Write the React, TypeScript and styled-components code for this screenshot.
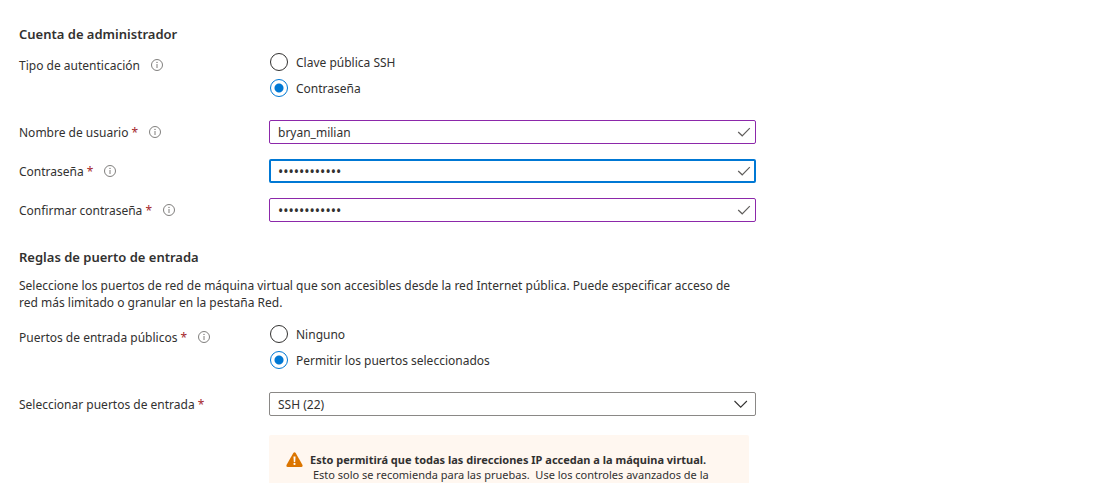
import React from "react";
import styled, { createGlobalStyle, css } from "styled-components";

const GlobalStyle = createGlobalStyle`
  *, *::before, *::after { box-sizing: border-box; }
  body {
    margin: 0;
    background: #ffffff;
    color: #323130;
    font-family: "Segoe UI", "Noto Sans", "Open Sans", sans-serif;
    font-size: 12px;
    line-height: 20px;
  }
`;

const Page = styled.main`
  height: 100vh;
  overflow: hidden;
  padding: 24px 19px 0;
`;

const Form = styled.form`
  max-width: 737px;
`;

const Section = styled.section`
  & + & {
    margin-top: 25px;
  }
`;

const Heading = styled.h2`
  margin: 0;
  font-size: 13px;
  font-weight: 600;
  line-height: 20px;
`;

const Description = styled.p`
  max-width: 728px;
  margin: 10px 0 14px;
  line-height: 17px;
`;

const Row = styled.div<{ $space?: number }>`
  display: grid;
  grid-template-columns: 250px minmax(0, 1fr);
  align-items: start;
  margin-top: ${({ $space = 15 }) => $space}px;
`;

const LabelCell = styled.div`
  display: flex;
  align-items: flex-start;
  gap: 11px;
  padding-top: 3px;
`;

const Required = styled.span`
  color: #a4262c;
`;

const InfoButton = styled.button`
  display: flex;
  margin-top: 3px;
  padding: 0;
  border: 0;
  background: none;
  color: #605e5c;
`;

const Options = styled.div`
  display: flex;
  flex-direction: column;
  gap: 8px;
  padding-left: 1px;
`;

const Option = styled.label`
  display: flex;
  align-items: center;
  gap: 8px;
  height: 18px;
`;

const OptionText = styled.span`
  padding-top: 2px;
`;

const Radio = styled.input`
  appearance: none;
  width: 18px;
  height: 18px;
  margin: 0;
  border: 1px solid #323130;
  border-radius: 50%;
  background: #ffffff;

  &:checked {
    border-color: #0078d4;
    background: radial-gradient(circle, #0078d4 4px, #ffffff 5px);
  }
`;

const Field = styled.div`
  display: grid;
  align-items: center;

  > * {
    grid-area: 1 / 1;
  }

  > svg {
    justify-self: end;
    margin-right: 5px;
    pointer-events: none;
  }
`;

const control = css`
  width: 100%;
  height: 24px;
  padding: 0 28px 0 8px;
  border: 1px solid #8c28aa;
  border-radius: 2px;
  outline: 0;
  background: #ffffff;
  color: inherit;
  font: inherit;
`;

const Input = styled.input<{ $active?: boolean }>`
  ${control}

  &[type="password"] {
    font-size: 14px;
  }

  ${({ $active }) =>
    $active &&
    css`
      padding-left: 7px;
      border: 2px solid #0078d4;
    `}
`;

const Select = styled.select`
  ${control}
  appearance: none;
  padding-top: 2px;
  border-color: #8a8886;
`;

const Warning = styled.div`
  display: flex;
  gap: 7px;
  max-width: 480px;
  margin: 19px 0 0 250px;
  padding: 17px 16px 17px 17px;
  border-radius: 2px;
  background: #fff7f0;
  font-size: 11px;
  line-height: 15px;

  > svg {
    flex: none;
  }
`;

const WarningText = styled.p`
  margin: 0;
  white-space: pre-wrap;
`;

const WarningTitle = styled.strong`
  display: block;
  font-weight: 700;
`;

const InfoIcon = () => (
  <svg width="12" height="12" viewBox="0 0 12 12" fill="none" aria-hidden="true">
    <circle cx="6" cy="6" r="5.5" stroke="currentColor" strokeWidth="0.8" />
    <path d="M6 5v4" stroke="currentColor" strokeWidth="0.8" />
    <circle cx="6" cy="3.4" r="0.55" fill="currentColor" />
  </svg>
);

const CheckIcon = () => (
  <svg width="14" height="12" viewBox="0 0 14 12" fill="none" aria-hidden="true">
    <path d="M1.2 6l4 3.8 7.6-7.6" stroke="#605e5c" strokeWidth="1.2" />
  </svg>
);

const ChevronIcon = () => (
  <svg width="18" height="12" viewBox="0 0 18 12" fill="none" aria-hidden="true">
    <path d="M1.5 3l6.2 6.2L13.9 3" stroke="#323130" strokeWidth="1.1" />
  </svg>
);

const WarningIcon = () => (
  <svg width="17" height="15" viewBox="0 0 17 15" aria-hidden="true">
    <path
      d="M7.3 1.1Q8.5-.6 9.7 1.1L16.500 13Q17 14.900 15.300 15H1.700Q0 14.900.5 13Z"
      fill="#db7500"
    />
    <path d="M7.500 4.500h2l-.3 5.500H7.800Z" fill="#ffffff" />
    <circle cx="8.500" cy="11.900" r="1.100" fill="#ffffff" />
  </svg>
);

interface LabelProps {
  text: string;
  htmlFor?: string;
  id?: string;
  required?: boolean;
  info?: boolean;
}

const FieldLabel = ({ text, htmlFor, id, required, info = true }: LabelProps) => (
  <LabelCell>
    <label htmlFor={htmlFor} id={id}>
      {text}
      {required && <Required> *</Required>}
    </label>
    {info && (
      <InfoButton type="button" aria-label={`Información: ${text}`}>
        <InfoIcon />
      </InfoButton>
    )}
  </LabelCell>
);

interface RadioRowProps {
  name: string;
  label: string;
  required?: boolean;
  options: string[];
  selected: string;
  space?: number;
}

const RadioRow = ({ name, label, required, options, selected, space }: RadioRowProps) => (
  <Row $space={space}>
    <FieldLabel id={`${name}-label`} text={label} required={required} />
    <Options role="radiogroup" aria-labelledby={`${name}-label`}>
      {options.map((option) => (
        <Option key={option}>
          <Radio type="radio" name={name} defaultChecked={option === selected} />
          <OptionText>{option}</OptionText>
        </Option>
      ))}
    </Options>
  </Row>
);

interface TextRowProps {
  id: string;
  label: string;
  value: string;
  type?: string;
  active?: boolean;
  space?: number;
}

const TextRow = ({ id, label, value, type = "text", active, space }: TextRowProps) => (
  <Row $space={space}>
    <FieldLabel htmlFor={id} text={label} required />
    <Field>
      <Input id={id} type={type} defaultValue={value} $active={active} />
      <CheckIcon />
    </Field>
  </Row>
);

export default function App() {
  return (
    <>
      <GlobalStyle />
      <Page>
        <Form>
          <Section>
            <Heading>Cuenta de administrador</Heading>
            <RadioRow
              name="auth"
              label="Tipo de autenticación"
              options={["Clave pública SSH", "Contraseña"]}
              selected="Contraseña"
              space={9}
            />
            <TextRow id="user" label="Nombre de usuario" value="bryan_milian" space={23} />
            <TextRow id="password" label="Contraseña" value="abcdefghijkl" type="password" active />
            <TextRow id="confirm" label="Confirmar contraseña" value="abcdefghijkl" type="password" />
          </Section>
          <Section>
            <Heading>Reglas de puerto de entrada</Heading>
            <Description>
              Seleccione los puertos de red de máquina virtual que son accesibles desde la red
              Internet pública. Puede especificar acceso de red más limitado o granular en la
              pestaña Red.
            </Description>
            <RadioRow
              name="ports"
              label="Puertos de entrada públicos"
              required
              options={["Ninguno", "Permitir los puertos seleccionados"]}
              selected="Permitir los puertos seleccionados"
              space={14}
            />
            <Row $space={23}>
              <FieldLabel
                htmlFor="inbound"
                text="Seleccionar puertos de entrada"
                required
                info={false}
              />
              <Field>
                <Select id="inbound" defaultValue="ssh">
                  <option value="ssh">SSH (22)</option>
                </Select>
                <ChevronIcon />
              </Field>
            </Row>
            <Warning role="alert">
              <WarningIcon />
              <WarningText>
                <WarningTitle>
                  Esto permitirá que todas las direcciones IP accedan a la máquina virtual.
                </WarningTitle>
                {" Esto solo se recomienda para las pruebas.  Use los controles avanzados de la"}
              </WarningText>
            </Warning>
          </Section>
        </Form>
      </Page>
    </>
  );
}
